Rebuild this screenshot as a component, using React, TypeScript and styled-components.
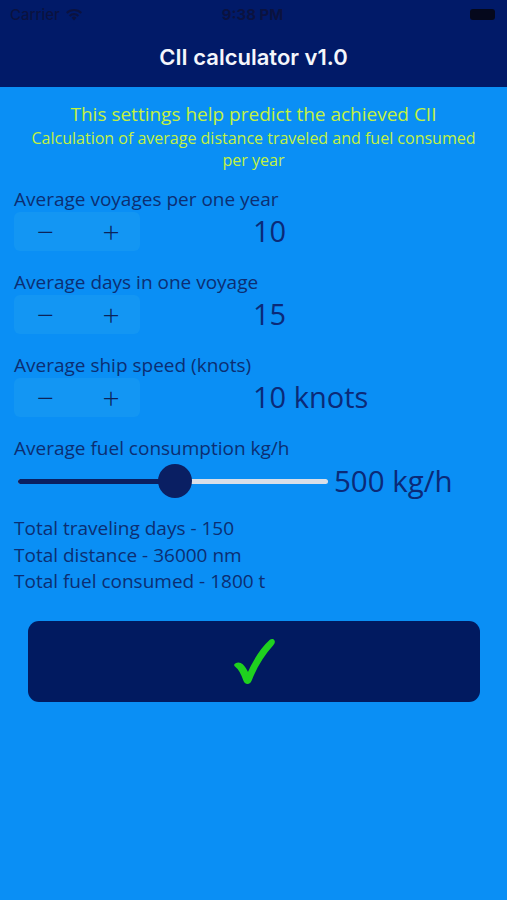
import React from "react";
import styled, { createGlobalStyle } from "styled-components";

const Global = createGlobalStyle`
  html, body { margin: 0; padding: 0; background: #0a8ff5; }
  body { font-family: "Open Sans", "Noto Sans", sans-serif; }
  * { box-sizing: border-box; }
`;

const Screen = styled.div`
  width: 507px;
  height: 900px;
  background: #0a8ff5;
  display: flex;
  flex-direction: column;
`;

const Header = styled.header`
  height: 87px;
  background: #011a68;
  display: flex;
  flex-direction: column;
`;

const StatusBar = styled.div`
  height: 29px;
  padding: 0 12px 0 10px;
  display: grid;
  grid-template-columns: 1fr auto 1fr;
  align-items: center;
  font-family: "Inter", "Liberation Sans", sans-serif;
  font-size: 15px;
  color: #0b1240;
`;

const Carrier = styled.div`
  display: flex;
  align-items: center;
  gap: 5px;
  font-weight: 500;
`;

const Clock = styled.div`
  font-weight: 700;
  font-size: 15px;
`;

const BatteryWrap = styled.div`
  display: flex;
  justify-content: flex-end;
`;

const Battery = styled.div`
  width: 25px;
  height: 11px;
  border-radius: 3px;
  background: #05081c;
`;

const Title = styled.h1`
  margin: 0;
  flex: 1;
  display: flex;
  align-items: center;
  justify-content: center;
  padding-bottom: 3px;
  font-family: "Inter", "Liberation Sans", sans-serif;
  font-weight: 600;
  font-size: 22px;
  color: #f4f6fb;
`;

const Content = styled.main`
  display: flex;
  flex-direction: column;
  padding: 14px 14px 0 14px;
`;

const Intro = styled.div`
  text-align: center;
  color: #c3f23f;
  display: flex;
  flex-direction: column;
  margin-bottom: 12px;
`;

const IntroTitle = styled.div`
  font-size: 19px;
  line-height: 26px;
`;

const IntroSub = styled.div`
  font-size: 16px;
  line-height: 22px;
  padding: 0 12px;
`;

const Label = styled.div`
  font-size: 19px;
  line-height: 24px;
  color: #0c2e72;
  margin-top: 4px;
`;

const Row = styled.div`
  display: flex;
  align-items: center;
  height: 41px;
  margin-bottom: 14px;
`;

const Stepper = styled.div`
  width: 126px;
  height: 39px;
  border-radius: 6px;
  background: #1396f3;
  display: flex;
  align-items: center;
  justify-content: space-between;
  padding: 0 10px 0 12px;
`;

const StepButton = styled.span`
  font-size: 30px;
  font-weight: 300;
  color: #0c2358;
  width: 38px;
  text-align: center;
  line-height: 1;
`;

const Value = styled.div`
  margin-left: 113px;
  margin-top: -2px;
  font-size: 29px;
  color: #0b2a78;
  line-height: 1;
`;

const SliderRow = styled.div`
  display: flex;
  align-items: center;
  height: 40px;
  margin-top: 1px;
  margin-bottom: 14px;
`;

const Track = styled.div`
  position: relative;
  margin-left: 4px;
  width: 310px;
  height: 5px;
  border-radius: 3px;
  background: #d9dfe8;
`;

const Fill = styled.div`
  height: 100%;
  border-radius: 3px;
  background: #0a2062;
`;

const Thumb = styled.div`
  position: absolute;
  top: 50%;
  width: 34px;
  height: 34px;
  border-radius: 50%;
  background: #0a1f63;
  transform: translate(-50%, -50%);
`;

const SliderValue = styled.div`
  margin-left: 6px;
  font-size: 29.5px;
  color: #0b2a78;
  line-height: 1;
`;

const Totals = styled.div`
  display: flex;
  flex-direction: column;
  font-size: 19px;
  line-height: 26.5px;
  color: #0c2e72;
`;

const Submit = styled.button`
  margin: 26px 27px 0 28px;
  height: 81px;
  border: none;
  border-radius: 11px;
  background: #011a60;
  display: flex;
  align-items: center;
  justify-content: center;
  cursor: pointer;
`;

const Wifi = () => (
  <svg width="18" height="13" viewBox="0 0 18 13">
    <path d="M9 12.5 L6.6 9.8 A3.4 3.4 0 0 1 11.4 9.8 Z" fill="#0b1240" />
    <path d="M3.9 7.2 A7.2 7.2 0 0 1 14.1 7.2 L12.6 8.7 A5.1 5.1 0 0 0 5.4 8.7 Z" fill="#0b1240" />
    <path d="M1 4.3 A11.3 11.3 0 0 1 17 4.3 L15.5 5.8 A9.2 9.2 0 0 0 2.5 5.8 Z" fill="#0b1240" />
  </svg>
);

const Check = () => (
  <svg width="46" height="48" viewBox="0 0 46 48">
    <path
      d="M5 28 C9 26 12 28 17 39 C23 25 30 13 40 4 C42 3 43 5 41 7 C31 18 24 30 19 43 C18 46 15 46 14 43 C12 37 9 31 5 28 Z"
      fill="#1fd11f"
      stroke="#1fd11f"
      strokeWidth="3.5"
      strokeLinejoin="round"
    />
  </svg>
);

type StepRow = { label: string; value: string };

const steps: StepRow[] = [
  { label: "Average voyages per one year", value: "10" },
  { label: "Average days in one voyage", value: "15" },
  { label: "Average ship speed (knots)", value: "10 knots" },
];

const sliderPercent = 50.6;

export default function App() {
  return (
    <Screen>
      <Global />
      <Header>
        <StatusBar>
          <Carrier>
            Carrier <Wifi />
          </Carrier>
          <Clock>9:38 PM</Clock>
          <BatteryWrap>
            <Battery />
          </BatteryWrap>
        </StatusBar>
        <Title>CII calculator v1.0</Title>
      </Header>
      <Content>
        <Intro>
          <IntroTitle>This settings help predict the achieved CII</IntroTitle>
          <IntroSub>Calculation of average distance traveled and fuel consumed per year</IntroSub>
        </Intro>
        {steps.map((s) => (
          <React.Fragment key={s.label}>
            <Label>{s.label}</Label>
            <Row>
              <Stepper>
                <StepButton>−</StepButton>
                <StepButton>+</StepButton>
              </Stepper>
              <Value>{s.value}</Value>
            </Row>
          </React.Fragment>
        ))}
        <Label>Average fuel consumption kg/h</Label>
        <SliderRow>
          <Track>
            <Fill style={{ width: `${sliderPercent}%` }} />
            <Thumb style={{ left: `${sliderPercent}%` }} />
          </Track>
          <SliderValue>500 kg/h</SliderValue>
        </SliderRow>
        <Totals>
          <span>Total traveling days - 150</span>
          <span>Total distance - 36000 nm</span>
          <span>Total fuel consumed - 1800 t</span>
        </Totals>
      </Content>
      <Submit aria-label="Confirm">
        <Check />
      </Submit>
    </Screen>
  );
}
